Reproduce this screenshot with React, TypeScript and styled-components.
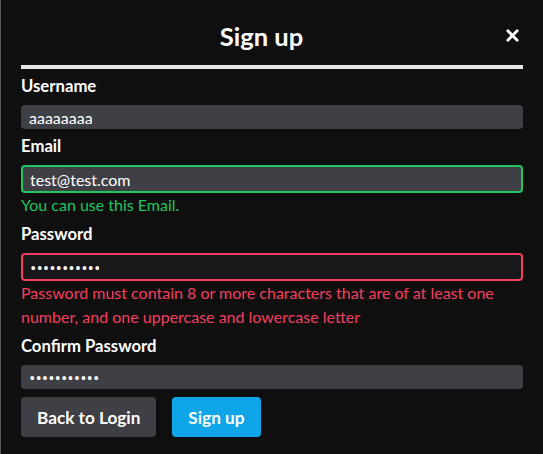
import React from 'react';
import styled, { createGlobalStyle } from 'styled-components';

const FONT = "'Lato', 'Open Sans', sans-serif";

const GlobalStyle = createGlobalStyle`
  html, body {
    margin: 0;
    padding: 0;
    background: #0f0f10;
  }
  body {
    font-family: ${FONT};
    color: #ffffff;
  }
  * {
    box-sizing: border-box;
  }
`;

const Modal = styled.div`
  width: 543px;
  height: 454px;
  background: #0f0f10;
  border-left: 1px solid #5a5a5a;
  padding: 0 20px;
`;

const Header = styled.header`
  display: flex;
  align-items: center;
  height: 69px;
  border-bottom: 4px solid #e5e7eb;
  padding-top: 6px;
`;

const Title = styled.h2`
  flex: 1;
  margin: 0;
  text-align: center;
  font-size: 25.5px;
  font-weight: 700;
`;

const CloseBtn = styled.button`
  width: 21px;
  height: 21px;
  padding: 0;
  border: 0;
  background: transparent;
  display: flex;
  align-items: center;
  justify-content: center;
  cursor: pointer;
`;

const Form = styled.form`
  display: flex;
  flex-direction: column;
  padding-top: 7px;
`;

const Label = styled.label<{ $first?: boolean }>`
  display: block;
  margin-top: ${(p) => (p.$first ? '0' : '7px')};
  padding-bottom: 4px;
  font-size: 16.7px;
  font-weight: 700;
  line-height: 20px;
`;

type Status = 'none' | 'ok' | 'error';

const Input = styled.input<{ $status: Status; $secret?: boolean }>`
  display: block;
  width: 100%;
  margin-top: 5px;
  height: ${(p) => (p.$status === 'none' ? '24px' : '28px')};
  padding: 0 ${(p) => (p.$status === 'none' ? '8px' : '7px')};
  border-radius: 4px;
  border: ${(p) =>
    p.$status === 'ok' ? '2px solid #22c55e' : p.$status === 'error' ? '2px solid #f43f5e' : '0'};
  background: ${(p) => (p.$status === 'error' ? '#18181b' : '#3f3f46')};
  color: #ffffff;
  font-family: ${(p) => (p.$secret ? "'Open Sans', sans-serif" : FONT)};
  font-size: ${(p) => (p.$secret ? '17px' : '16px')};
  outline: none;
  caret-color: #ffffff;
`;

const Hint = styled.p<{ $tone: 'ok' | 'error' }>`
  margin: 0;
  font-size: 16px;
  line-height: 24px;
  color: ${(p) => (p.$tone === 'ok' ? '#22c55e' : '#f43f5e')};
`;

const Actions = styled.div`
  display: flex;
  gap: 16px;
  margin-top: 8px;
`;

const Button = styled.button<{ $primary?: boolean }>`
  height: 40px;
  padding: 0 16px;
  border: 0;
  border-radius: 4px;
  background: ${(p) => (p.$primary ? '#0ea5e9' : '#3f3f46')};
  color: #ffffff;
  font-family: ${FONT};
  font-size: 17.2px;
  font-weight: 700;
  cursor: pointer;
`;

const CloseIcon = () => (
  <svg width="13" height="13" viewBox="0 0 13 13" fill="none">
    <path d="M1.8 1.8 L11.2 11.2 M11.2 1.8 L1.8 11.2" stroke="#ffffff" strokeWidth="2.8" strokeLinecap="round" />
  </svg>
);

export default function App() {
  return (
    <>
      <GlobalStyle />
      <Modal>
        <Header>
          <Title>Sign up</Title>
          <CloseBtn type="button" aria-label="close">
            <CloseIcon />
          </CloseBtn>
        </Header>
        <Form onSubmit={(e) => e.preventDefault()}>
          <Label $first htmlFor="username">Username</Label>
          <Input id="username" $status="none" type="text" defaultValue="aaaaaaaa" />

          <Label htmlFor="email">Email</Label>
          <Input id="email" $status="ok" type="email" defaultValue="test@test.com" />
          <Hint $tone="ok">You can use this Email.</Hint>

          <Label htmlFor="password">Password</Label>
          <Input id="password" $status="error" $secret type="password" defaultValue="aaaaaaaaaaa" autoFocus />
          <Hint $tone="error">
            Password must contain 8 or more characters that are of at least one number, and one
            uppercase and lowercase letter
          </Hint>

          <Label htmlFor="confirm">Confirm Password</Label>
          <Input id="confirm" $status="none" $secret type="password" defaultValue="aaaaaaaaaaa" />

          <Actions>
            <Button type="button">Back to Login</Button>
            <Button type="submit" $primary>
              Sign up
            </Button>
          </Actions>
        </Form>
      </Modal>
    </>
  );
}
